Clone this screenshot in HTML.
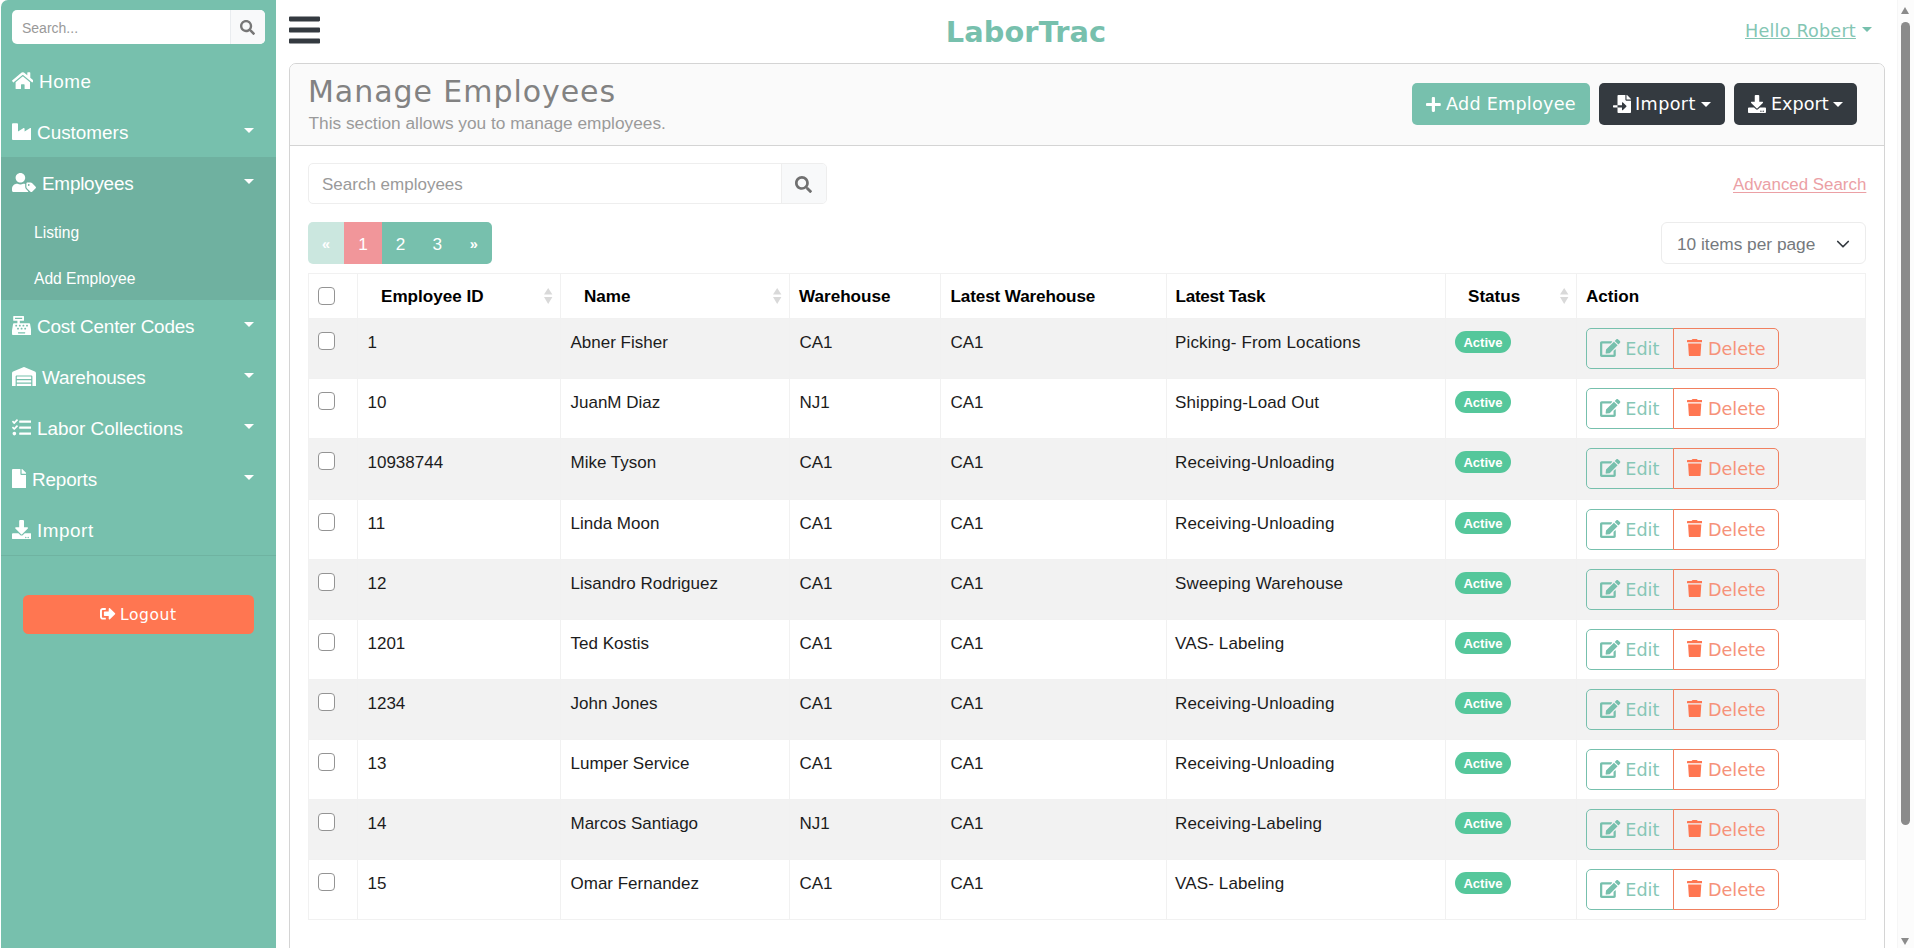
<!DOCTYPE html>
<html lang="en">
<head>
<meta charset="utf-8">
<title>LaborTrac - Manage Employees</title>
<style>
*{box-sizing:border-box;margin:0;padding:0}
html,body{width:1914px;height:948px;overflow:hidden;background:#fff}
body{font-family:"Liberation Sans","DejaVu Sans",sans-serif;color:#212529;position:relative}
svg{display:block}
.m{font-family:"DejaVu Sans","Liberation Sans",sans-serif}
a{text-decoration:none;color:inherit}
/* ---------- sidebar ---------- */
#sidebar{position:absolute;left:1px;top:0;width:275px;height:948px;background:#77c0ad;border-top-left-radius:7px;color:#fff}
.sb-search{position:absolute;left:11px;top:10px;width:253px;height:34px;background:#fff;border-radius:5px;overflow:hidden}
.sb-search span{position:absolute;left:10px;top:9.5px;font-size:14px;color:#999}
.sb-search .btn{position:absolute;left:218px;top:0;width:35px;height:34px;background:#f8f9fa;border-left:1px solid #e9ecef}
.sb-search .btn svg{position:absolute;left:9px;top:10px;width:15px;height:15px;fill:#777}
.nav{position:absolute;left:0;top:55px;width:275px;list-style:none}
.nav .item{height:51px;position:relative}
.nav .item .ic{position:absolute;left:10.9px;top:16.2px;fill:#fff}
.nav .item .lbl{position:absolute;top:16px;font-size:18.9px;white-space:nowrap;color:#fff}
.nav .item .caret{position:absolute;left:243px;top:22.4px;width:0;height:0;border-left:5.2px solid transparent;border-right:5.2px solid transparent;border-top:5.5px solid #fff}
.nav .active{background:#6fb1a0}
.nav .sub{list-style:none}
.nav .sub li{height:46px;position:relative}
.nav .sub li span{position:absolute;left:33px;top:15.5px;font-size:15.6px;color:#fff;white-space:nowrap}
.sb-div{position:absolute;left:0;top:555px;width:275px;height:1px;background:#6fb3a1}
.logout{position:absolute;left:22px;top:595px;width:231px;height:38.6px;background:#ff7651;border-radius:5.5px;color:#fff}
.logout svg{position:absolute;left:77px;top:11px;width:15.5px;height:15.5px;fill:#fff}
.logout span{position:absolute;left:97px;top:11.2px;letter-spacing:.6px;font-size:15.5px;white-space:nowrap;font-family:"DejaVu Sans","Liberation Sans",sans-serif}
/* ---------- top bar ---------- */
#burger{position:absolute;left:289px;top:11.5px;width:31px;height:36px;fill:#343a40}
#brand{position:absolute;left:826px;width:400px;text-align:center;top:14.5px;font-size:28.8px;font-weight:bold;color:#77c0ad;white-space:nowrap;letter-spacing:.1px}
#hello{position:absolute;left:1745px;top:21px;font-size:17.6px;letter-spacing:.2px;color:#84c6b4;white-space:nowrap}
#hello span{text-decoration:underline}
#hello i{position:absolute;left:116.5px;top:6px;width:0;height:0;border-left:5px solid transparent;border-right:5px solid transparent;border-top:5px solid #77c0ad}
/* ---------- card ---------- */
#card{position:absolute;left:289px;top:63px;width:1596px;height:900px;border:1px solid #d4d4d4;border-radius:7px;background:#fff}
#card-h{position:absolute;left:0;top:0;width:1594px;height:82px;background:#fafafa;border-bottom:1px solid #d4d4d4;border-radius:6px 6px 0 0}
#card-h h1{position:absolute;left:18px;top:10.2px;font-size:30px;letter-spacing:.95px;font-weight:normal;color:#828282;white-space:nowrap}
#card-h p{position:absolute;left:18.5px;top:49.2px;font-size:17.3px;color:#9a9a9a;white-space:nowrap}
.hb{position:absolute;top:19px;height:42px;border-radius:5px;color:#fff;font-size:17.6px;white-space:nowrap;font-family:"DejaVu Sans","Liberation Sans",sans-serif}
.hb svg{position:absolute;fill:#fff}
.hb span{position:absolute;top:10.6px}
.hb i{position:absolute;top:19px;width:0;height:0;border-left:5px solid transparent;border-right:5px solid transparent;border-top:5px solid #fff}
/* toolbar */
#semp{position:absolute;left:18px;top:99.3px;width:519px;height:41.2px;border:1px solid #eee;border-radius:5px;background:#fff}
#semp span{position:absolute;left:13px;top:10.3px;font-size:17px;color:#9a9a9a;white-space:nowrap}
#semp .btn{position:absolute;left:472px;top:0;width:45px;height:39.2px;background:#f8f9fa;border-left:1px solid #eee;border-radius:0 4px 4px 0}
#semp .btn svg{position:absolute;left:12.5px;top:11.8px;width:17px;height:17px;fill:#707070}
#adv{position:absolute;left:1443px;top:110.8px;font-size:16.9px;color:#eba0a5;text-underline-offset:2px;text-decoration:underline;white-space:nowrap}
#pager{position:absolute;left:18px;top:158px;height:42px;width:184px;border-radius:5px;overflow:hidden;font-size:17.2px;color:#fff;list-style:none}
#pager li{position:absolute;top:0;height:42px;text-align:center;line-height:45px;background:#77c0ad}
#pager li.q{font-size:14.5px;font-weight:bold;line-height:44.5px}
#perpage{position:absolute;left:1371px;top:158px;width:205px;height:42px;border:1px solid #ececec;border-radius:6px;background:#fff}
#perpage span{position:absolute;left:15px;top:11px;font-size:17.3px;color:#75797d;white-space:nowrap}
#perpage svg{position:absolute;left:174px;top:14.5px;width:14px;height:12.25px;fill:none;stroke:#343a40;stroke-width:2;stroke-linecap:round;stroke-linejoin:round}
/* table */
#tbl{position:absolute;left:18px;top:209px;width:1557px;border-collapse:collapse;table-layout:fixed}
#tbl th,#tbl td{border:1px solid #f1f1f1;vertical-align:top;text-align:left;position:relative}
#tbl th{height:45px;font-size:17.1px;font-weight:bold;color:#000}
#tbl td{height:60px;font-size:17px;color:#1c1c1c}
#tbl tr.odd td{background:#f2f2f2}
#tbl th span.t{position:absolute;top:13.2px;white-space:nowrap}
#tbl td span.t{position:absolute;left:9.5px;top:13.8px;white-space:nowrap}
#tbl td:nth-child(6) span.t{left:8px;letter-spacing:.14px}
.cb{position:absolute;left:9px;top:13.3px;width:17px;height:17.4px;border:1px solid #949494;border-radius:4px;background:#fff}
.sort{position:absolute;right:7.4px;top:14.1px;width:8.4px;height:16px;fill:#d9d9d9}
.badge{position:absolute;left:9px;top:12px;width:56px;height:21.8px;border-radius:11px;background:#55c79b;color:#fff;font-size:13px;font-weight:bold;text-align:center;line-height:24.4px;overflow:hidden}
.grp{position:absolute;left:9.3px;top:9.3px;width:194px;height:40.4px}
.grp .e{position:absolute;left:0;top:0;width:87.6px;height:40.4px;border:1px solid #77c0ad;border-radius:5px 0 0 5px;color:#77c0ad}
.grp .d{position:absolute;left:86.6px;top:0;width:106.4px;height:40.4px;border:1px solid #f08060;border-radius:0 5px 5px 0;color:#f4845f}
.grp svg{position:absolute;top:9.3px}
.grp .e span{color:#86c7b6}.grp .d span{color:#f6927a}
.grp span{position:absolute;top:9.3px;font-size:17.6px;white-space:nowrap;font-family:"DejaVu Sans","Liberation Sans",sans-serif}
/* scrollbar */
#sbar{position:absolute;left:1897px;top:0;width:17px;height:948px;background:#fcfcfc;border-left:1px solid #f6f6f6}
#sbar .th{position:absolute;left:3px;top:22px;width:9px;height:802.5px;border-radius:5px;background:#8b8b8b}
#sbar .up{position:absolute;left:3px;top:7px;width:0;height:0;border-left:4.5px solid transparent;border-right:4.5px solid transparent;border-bottom:7px solid #8b8b8b}
#sbar .dn{position:absolute;left:3px;top:938px;width:0;height:0;border-left:4.5px solid transparent;border-right:4.5px solid transparent;border-top:7px solid #8b8b8b}
</style>
</head>
<body>
<div id="sidebar">
  <div class="sb-search"><span>Search...</span><div class="btn"><svg viewBox="0 0 512 512"><path d="M505 442.7L405.3 343c-4.500-4.500-10.600-7-17-7H372c27.600-35.300 44-79.700 44-128C416 93.100 322.900 0 208 0S0 93.100 0 208s93.100 208 208 208c48.300 0 92.700-16.400 128-44v16.300c0 6.400 2.500 12.500 7 17l99.700 99.700c9.400 9.400 24.600 9.400 33.900 0l28.300-28.300c9.400-9.400 9.400-24.600.1-34zM208 336c-70.700 0-128-57.200-128-128 0-70.700 57.200-128 128-128 70.700 0 128 57.200 128 128 0 70.700-57.200 128-128 128z"/></svg></div></div>
  <ul class="nav">
    <li class="item"><svg class="ic" style="width:21.6px;height:19.2px" viewBox="0 0 576 512"><path d="M280.370 148.260L96 300.110V464a16 16 0 0 0 16 16l112.060-.29a16 16 0 0 0 15.920-16V368a16 16 0 0 1 16-16h64a16 16 0 0 1 16 16v95.640a16 16 0 0 0 16 16.050L464 480a16 16 0 0 0 16-16V300L295.670 148.260a12.190 12.190 0 0 0-15.300 0zM571.600 251.470L488 182.560V44.050a12 12 0 0 0-12-12h-56a12 12 0 0 0-12 12v72.610L318.470 43a48 48 0 0 0-61 0L4.340 251.470a12 12 0 0 0-1.600 16.900l25.500 31A12 12 0 0 0 45.150 301l235.220-193.740a12.190 12.190 0 0 1 15.300 0L530.900 301a12 12 0 0 0 16.900-1.600l25.500-31a12 12 0 0 0-1.700-16.930z"/></svg><span class="lbl" style="left:38px;letter-spacing:.5px">Home</span></li>
    <li class="item"><svg class="ic" style="width:19.2px;height:19.2px" viewBox="0 0 512 512"><path d="M475.115 163.781L336 252.309v-68.280c0-18.916-20.931-30.399-36.885-20.248L160 252.309V56c0-13.255-10.745-24-24-24H24C10.745 32 0 42.745 0 56v400c0 13.255 10.745 24 24 24h464c13.255 0 24-10.745 24-24V184.029c0-18.917-20.931-30.399-36.885-20.248z"/></svg><span class="lbl" style="left:36px">Customers</span><i class="caret"></i></li>
    <li class="active">
      <div class="item"><svg class="ic" style="width:24px;height:19.2px" viewBox="0 0 640 512"><path d="M630.600 364.900l-90.300-90.200c-12-12-28.300-18.700-45.300-18.700h-79.300c-17.700 0-32 14.300-32 32v79.200c0 17 6.700 33.200 18.700 45.200l90.300 90.200c12.500 12.500 32.800 12.500 45.300 0l92.500-92.500c12.600-12.500 12.600-32.700.1-45.200zm-182.800-21c-13.300 0-24-10.700-24-24s10.700-24 24-24 24 10.700 24 24c0 13.200-10.700 24-24 24zm-223.800-88c70.700 0 128-57.300 128-128C352 57.300 294.700 0 224 0S96 57.300 96 128c0 70.600 57.300 127.900 128 127.900zm127.800 111.200V294c-12.200-3.600-24.900-6.200-38.200-6.200h-16.700c-22.200 10.200-46.900 16-72.900 16s-50.600-5.800-72.900-16h-16.700C60.200 287.900 0 348.100 0 422.300v41.600c0 26.500 21.500 48 48 48h352c15.500 0 29.100-7.500 37.900-18.900l-58-58c-18.100-18.100-28.100-42.200-28.100-67.900z"/></svg><span class="lbl" style="left:41px;letter-spacing:-.23px">Employees</span><i class="caret"></i></div>
      <ul class="sub">
        <li><span>Listing</span></li>
        <li><span>Add Employee</span></li>
      </ul>
    </li>
    <li class="item"><svg class="ic" style="width:19.2px;height:19.2px" viewBox="0 0 512 512"><path d="M511.100 378.800l-26.700-160c-2.600-15.400-15.900-26.700-31.600-26.700H208v-64h96c8.800 0 16-7.200 16-16V16c0-8.800-7.200-16-16-16H48c-8.800 0-16 7.200-16 16v96c0 8.800 7.200 16 16 16h96v64H59.100c-15.600 0-29 11.300-31.600 26.700L.8 378.700c-.6 3.500-.9 7-.9 10.500V480c0 17.700 14.300 32 32 32h448c17.700 0 32-14.300 32-32v-90.700c.1-3.500-.2-7-.8-10.500zM280 248c0-8.800 7.200-16 16-16h16c8.800 0 16 7.200 16 16v16c0 8.800-7.200 16-16 16h-16c-8.800 0-16-7.200-16-16v-16zm-32 64h16c8.800 0 16 7.200 16 16v16c0 8.800-7.200 16-16 16h-16c-8.800 0-16-7.200-16-16v-16c0-8.800 7.200-16 16-16zm-32-80c8.800 0 16 7.200 16 16v16c0 8.800-7.200 16-16 16h-16c-8.800 0-16-7.200-16-16v-16c0-8.800 7.200-16 16-16h16zM80 80V48h192v32H80zm40 200h-16c-8.800 0-16-7.200-16-16v-16c0-8.800 7.200-16 16-16h16c8.800 0 16 7.200 16 16v16c0 8.800-7.200 16-16 16zm16 64v-16c0-8.800 7.200-16 16-16h16c8.800 0 16 7.200 16 16v16c0 8.800-7.200 16-16 16h-16c-8.800 0-16-7.200-16-16zm216 112c0 4.400-3.600 8-8 8H168c-4.400 0-8-3.600-8-8v-16c0-4.400 3.600-8 8-8h176c4.400 0 8 3.600 8 8v16zm24-112c0 8.800-7.200 16-16 16h-16c-8.800 0-16-7.200-16-16v-16c0-8.800 7.200-16 16-16h16c8.800 0 16 7.200 16 16v16zm48-80c0 8.800-7.200 16-16 16h-16c-8.800 0-16-7.200-16-16v-16c0-8.800 7.200-16 16-16h16c8.800 0 16 7.200 16 16v16z"/></svg><span class="lbl" style="left:36px;letter-spacing:-.2px">Cost Center Codes</span><i class="caret"></i></li>
    <li class="item"><svg class="ic" style="width:24px;height:19.2px" viewBox="0 0 640 512"><path d="M504 352H136.400c-4.400 0-8 3.600-8 8l-.1 48c0 4.400 3.600 8 8 8H504c4.400 0 8-3.600 8-8v-48c0-4.400-3.600-8-8-8zm0 96H136.100c-4.400 0-8 3.600-8 8l-.1 48c0 4.400 3.600 8 8 8h368c4.400 0 8-3.600 8-8v-48c0-4.400-3.600-8-8-8zm0-192H136.600c-4.400 0-8 3.600-8 8l-.1 48c0 4.400 3.600 8 8 8H504c4.400 0 8-3.600 8-8v-48c0-4.400-3.600-8-8-8zm106.500-139L338.400 3.700a48.150 48.150 0 0 0-36.900 0L29.500 117C11.700 124.500 0 141.900 0 161.300V504c0 4.400 3.600 8 8 8h80c4.400 0 8-3.600 8-8V256c0-17.600 14.600-32 32.600-32h382.800c18 0 32.600 14.400 32.600 32v248c0 4.400 3.600 8 8 8h80c4.400 0 8-3.600 8-8V161.300c0-19.400-11.700-36.800-29.500-44.300z"/></svg><span class="lbl" style="left:41px;letter-spacing:-.19px">Warehouses</span><i class="caret"></i></li>
    <li class="item"><svg class="ic" style="width:19.2px;height:19.2px" viewBox="0 0 512 512"><path d="M139.610 35.500a12 12 0 0 0-17 0L58.930 98.810l-22.700-22.120a12 12 0 0 0-17 0L3.530 92.410a12 12 0 0 0 0 17l47.590 47.400a12.780 12.780 0 0 0 17.610 0l15.590-15.620L156.520 69a12.090 12.090 0 0 0 .09-17zm0 159.190a12 12 0 0 0-17 0l-63.680 63.720-22.700-22.100a12 12 0 0 0-17 0L3.530 252a12 12 0 0 0 0 17L51 316.500a12.770 12.770 0 0 0 17.600 0l15.700-15.690 72.200-72.220a12 12 0 0 0 .09-16.900zM64 368c-26.490 0-48.590 21.500-48.590 48S37.530 464 64 464a48 48 0 0 0 0-96zm432 16H208a16 16 0 0 0-16 16v32a16 16 0 0 0 16 16h288a16 16 0 0 0 16-16v-32a16 16 0 0 0-16-16zm0-320H208a16 16 0 0 0-16 16v32a16 16 0 0 0 16 16h288a16 16 0 0 0 16-16V80a16 16 0 0 0-16-16zm0 160H208a16 16 0 0 0-16 16v32a16 16 0 0 0 16 16h288a16 16 0 0 0 16-16v-32a16 16 0 0 0-16-16z"/></svg><span class="lbl" style="left:36px">Labor Collections</span><i class="caret"></i></li>
    <li class="item"><svg class="ic" style="width:14.4px;height:19.2px" viewBox="0 0 384 512"><path d="M224 136V0H24C10.700 0 0 10.700 0 24v464c0 13.300 10.700 24 24 24h336c13.300 0 24-10.700 24-24V160H248c-13.200 0-24-10.800-24-24zm160-14.100v6.100H256V0h6.100c6.400 0 12.500 2.500 17 7l97.900 98c4.500 4.500 7 10.600 7 16.900z"/></svg><span class="lbl" style="left:31px;letter-spacing:-.17px">Reports</span><i class="caret"></i></li>
    <li class="item"><svg class="ic" style="width:19.2px;height:19.2px" viewBox="0 0 512 512"><path d="M216 0h80c13.300 0 24 10.700 24 24v168h87.700c17.800 0 26.700 21.500 14.100 34.100L269.700 378.300c-7.500 7.500-19.800 7.500-27.300 0L90.100 226.100c-12.600-12.600-3.700-34.100 14.100-34.100H192V24c0-13.300 10.700-24 24-24zm296 376v112c0 13.300-10.700 24-24 24H24c-13.300 0-24-10.700-24-24V376c0-13.300 10.700-24 24-24h146.700l49 49c20.100 20.100 52.500 20.100 72.600 0l49-49H488c13.300 0 24 10.700 24 24zm-124 88c0-11-9-20-20-20s-20 9-20 20 9 20 20 20 20-9 20-20zm64 0c0-11-9-20-20-20s-20 9-20 20 9 20 20 20 20-9 20-20z"/></svg><span class="lbl" style="left:36px;letter-spacing:.53px">Import</span></li>
  </ul>
  <div class="sb-div"></div>
  <a class="logout"><svg viewBox="0 0 512 512"><path d="M497 273L329 441c-15 15-41 4.500-41-17v-96H152c-13.300 0-24-10.700-24-24v-96c0-13.300 10.700-24 24-24h136V88c0-21.400 25.900-32 41-17l168 168c9.300 9.400 9.300 24.600 0 34zM192 436v-40c0-6.600-5.400-12-12-12H96c-17.700 0-32-14.300-32-32V160c0-17.700 14.300-32 32-32h84c6.600 0 12-5.400 12-12V76c0-6.600-5.400-12-12-12H96c-53 0-96 43-96 96v192c0 53 43 96 96 96h84c6.600 0 12-5.400 12-12z"/></svg><span>Logout</span></a>
</div>

<svg id="burger" viewBox="0 0 448 512"><path d="M16 132h416c8.837 0 16-7.163 16-16V76c0-8.837-7.163-16-16-16H16C7.163 60 0 67.163 0 76v40c0 8.837 7.163 16 16 16zm0 160h416c8.837 0 16-7.163 16-16v-40c0-8.837-7.163-16-16-16H16c-8.837 0-16 7.163-16 16v40c0 8.837 7.163 16 16 16zm0 160h416c8.837 0 16-7.163 16-16v-40c0-8.837-7.163-16-16-16H16c-8.837 0-16 7.163-16 16v40c0 8.837 7.163 16 16 16z"/></svg>
<div id="brand" class="m">LaborTrac</div>
<a id="hello" class="m"><span>Hello Robert</span><i></i></a>

<div id="card">
  <div id="card-h">
    <h1 class="m">Manage Employees</h1>
    <p>This section allows you to manage employees.</p>
    <a class="hb" style="left:1122px;width:178px;background:#77c0ad"><svg style="left:14.3px;top:12.5px;width:14.8px;height:17px" viewBox="0 0 448 512"><path d="M416 208H272V64c0-17.670-14.330-32-32-32h-32c-17.670 0-32 14.330-32 32v144H32c-17.670 0-32 14.330-32 32v32c0 17.670 14.330 32 32 32h144v144c0 17.670 14.330 32 32 32h32c17.670 0 32-14.330 32-32V304h144c17.670 0 32-14.330 32-32v-32c0-17.670-14.330-32-32-32z"/></svg><span style="left:34px;letter-spacing:.25px">Add Employee</span></a>
    <a class="hb" style="left:1309px;width:126px;background:#343a40"><svg style="left:14px;top:12px;width:18px;height:18px" viewBox="0 0 512 512"><path d="M16 288c-8.800 0-16 7.200-16 16v32c0 8.800 7.200 16 16 16h112v-64zm489-183L407.100 7c-4.500-4.500-10.600-7-17-7H384v128h128v-6.100c0-6.300-2.500-12.400-7-16.900zm-153 31V0H152c-13.300 0-24 10.700-24 24v264h128v-65.200c0-14.300 17.300-21.400 27.400-11.300L379 308c6.600 6.700 6.600 17.400 0 24l-95.700 96.400c-10.100 10.100-27.400 3-27.400-11.300V352H128v136c0 13.300 10.700 24 24 24h336c13.300 0 24-10.700 24-24V160H376c-13.200 0-24-10.800-24-24z"/></svg><span style="left:36px;letter-spacing:.4px">Import</span><i style="left:102px"></i></a>
    <a class="hb" style="left:1444px;width:123px;background:#343a40"><svg style="left:14px;top:12px;width:18px;height:18px" viewBox="0 0 512 512"><path d="M216 0h80c13.300 0 24 10.700 24 24v168h87.700c17.800 0 26.700 21.500 14.100 34.100L269.700 378.300c-7.500 7.500-19.800 7.500-27.300 0L90.100 226.100c-12.600-12.600-3.700-34.100 14.100-34.100H192V24c0-13.300 10.700-24 24-24zm296 376v112c0 13.300-10.700 24-24 24H24c-13.300 0-24-10.700-24-24V376c0-13.300 10.700-24 24-24h146.700l49 49c20.100 20.100 52.500 20.100 72.600 0l49-49H488c13.300 0 24 10.700 24 24zm-124 88c0-11-9-20-20-20s-20 9-20 20 9 20 20 20 20-9 20-20zm64 0c0-11-9-20-20-20s-20 9-20 20 9 20 20 20 20-9 20-20z"/></svg><span style="left:37px">Export</span><i style="left:99px"></i></a>
  </div>
  <div id="semp"><span>Search employees</span><div class="btn"><svg viewBox="0 0 512 512"><path d="M505 442.7L405.3 343c-4.500-4.500-10.600-7-17-7H372c27.600-35.300 44-79.700 44-128C416 93.100 322.900 0 208 0S0 93.100 0 208s93.100 208 208 208c48.300 0 92.700-16.400 128-44v16.300c0 6.400 2.500 12.500 7 17l99.700 99.700c9.400 9.400 24.600 9.400 33.900 0l28.300-28.300c9.400-9.400 9.400-24.600.1-34zM208 336c-70.700 0-128-57.200-128-128 0-70.700 57.200-128 128-128 70.700 0 128 57.200 128 128 0 70.700-57.200 128-128 128z"/></svg></div></div>
  <a id="adv">Advanced Search</a>
  <ul id="pager"><li class="q" style="left:0;width:36px;background:#cbe7df">&laquo;</li><li style="left:36px;width:38.3px;background:#f1969a">1</li><li style="left:74.3px;width:36.7px">2</li><li style="left:111px;width:36.5px">3</li><li class="q" style="left:147.5px;width:36.5px">&raquo;</li></ul>
  <div id="perpage"><span>10 items per page</span><svg viewBox="0 0 16 14"><path d="M2 4l6 6 6-6"/></svg></div>
  <table id="tbl">
    <colgroup><col style="width:49px"><col style="width:203px"><col style="width:229px"><col style="width:151px"><col style="width:226px"><col style="width:279px"><col style="width:131px"><col style="width:289px"></colgroup>
    <thead>
      <tr><th><span class="cb"></span></th><th><span class="t" style="left:23px">Employee ID</span><svg class="sort" viewBox="0 0 8.4 16"><path d="M4.2 0L8.4 6.6H0zM0 9.1H8.4L4.2 15.9z"/></svg></th><th><span class="t" style="left:23px">Name</span><svg class="sort" viewBox="0 0 8.4 16"><path d="M4.2 0L8.4 6.6H0zM0 9.1H8.4L4.2 15.9z"/></svg></th><th><span class="t" style="left:9px">Warehouse</span></th><th><span class="t" style="left:9.5px;letter-spacing:-.12px">Latest Warehouse</span></th><th><span class="t" style="left:8.5px;letter-spacing:-.27px">Latest Task</span></th><th><span class="t" style="left:22px">Status</span><svg class="sort" viewBox="0 0 8.4 16"><path d="M4.2 0L8.4 6.6H0zM0 9.1H8.4L4.2 15.9z"/></svg></th><th><span class="t" style="left:9px">Action</span></th></tr>
    </thead>
    <tbody>
      <tr class="odd"><td><span class="cb"></span></td><td><span class="t">1</span></td><td><span class="t">Abner Fisher</span></td><td><span class="t">CA1</span></td><td><span class="t">CA1</span></td><td><span class="t">Picking- From Locations</span></td><td><span class="badge">Active</span></td><td><div class="grp"><a class="e"><svg style="left:13px;width:20.3px;height:18px;fill:#77c0ad" viewBox="0 0 576 512"><path d="M402.600 83.200l90.200 90.200c3.800 3.800 3.800 10 0 13.800L274.400 405.600l-92.800 10.300c-12.400 1.400-22.900-9.100-21.500-21.500l10.300-92.800L388.800 83.200c3.800-3.800 10-3.800 13.800 0zm162-22.900l-48.800-48.800c-15.200-15.200-39.900-15.200-55.200 0l-35.400 35.400c-3.800 3.800-3.800 10 0 13.800l90.200 90.200c3.800 3.800 10 3.800 13.800 0l35.400-35.400c15.200-15.300 15.200-40 0-55.200zM384 346.200V448H64V128h229.800c3.200 0 6.200-1.300 8.500-3.500l40-40c7.600-7.600 2.200-20.500-8.500-20.500H48C21.500 64 0 85.500 0 112v352c0 26.500 21.500 48 48 48h352c26.500 0 48-21.500 48-48V306.200c0-10.700-12.900-16-20.500-8.500l-40 40c-2.200 2.300-3.500 5.300-3.500 8.500z"/></svg><span style="left:38px">Edit</span></a><a class="d"><svg style="left:13px;width:15.4px;height:17.6px;fill:#ff7651" viewBox="0 0 448 512"><path d="M432 32H312l-9.400-18.700A24 24 0 0 0 281.100 0H166.800a23.720 23.720 0 0 0-21.400 13.300L136 32H16A16 16 0 0 0 0 48v32a16 16 0 0 0 16 16h416a16 16 0 0 0 16-16V48a16 16 0 0 0-16-16zM53.200 467a48 48 0 0 0 47.900 45h245.800a48 48 0 0 0 47.900-45L416 128H32z"/></svg><span style="left:34px">Delete</span></a></div></td></tr>
      <tr class="even"><td><span class="cb"></span></td><td><span class="t">10</span></td><td><span class="t">JuanM Diaz</span></td><td><span class="t">NJ1</span></td><td><span class="t">CA1</span></td><td><span class="t">Shipping-Load Out</span></td><td><span class="badge">Active</span></td><td><div class="grp"><a class="e"><svg style="left:13px;width:20.3px;height:18px;fill:#77c0ad" viewBox="0 0 576 512"><path d="M402.600 83.200l90.200 90.200c3.800 3.800 3.800 10 0 13.800L274.400 405.600l-92.800 10.300c-12.400 1.400-22.900-9.100-21.500-21.500l10.300-92.800L388.800 83.200c3.800-3.800 10-3.800 13.800 0zm162-22.900l-48.800-48.800c-15.200-15.200-39.900-15.200-55.200 0l-35.400 35.400c-3.800 3.800-3.800 10 0 13.800l90.200 90.200c3.800 3.800 10 3.800 13.800 0l35.400-35.400c15.200-15.300 15.200-40 0-55.200zM384 346.200V448H64V128h229.800c3.200 0 6.200-1.300 8.500-3.500l40-40c7.600-7.600 2.200-20.500-8.500-20.500H48C21.500 64 0 85.500 0 112v352c0 26.500 21.500 48 48 48h352c26.500 0 48-21.500 48-48V306.200c0-10.700-12.900-16-20.500-8.500l-40 40c-2.200 2.300-3.500 5.300-3.500 8.500z"/></svg><span style="left:38px">Edit</span></a><a class="d"><svg style="left:13px;width:15.4px;height:17.6px;fill:#ff7651" viewBox="0 0 448 512"><path d="M432 32H312l-9.400-18.700A24 24 0 0 0 281.100 0H166.800a23.720 23.720 0 0 0-21.400 13.300L136 32H16A16 16 0 0 0 0 48v32a16 16 0 0 0 16 16h416a16 16 0 0 0 16-16V48a16 16 0 0 0-16-16zM53.200 467a48 48 0 0 0 47.900 45h245.800a48 48 0 0 0 47.900-45L416 128H32z"/></svg><span style="left:34px">Delete</span></a></div></td></tr>
      <tr class="odd" style="height:61px"><td style="height:61px"><span class="cb"></span></td><td><span class="t">10938744</span></td><td><span class="t">Mike Tyson</span></td><td><span class="t">CA1</span></td><td><span class="t">CA1</span></td><td><span class="t">Receiving-Unloading</span></td><td><span class="badge">Active</span></td><td><div class="grp"><a class="e"><svg style="left:13px;width:20.3px;height:18px;fill:#77c0ad" viewBox="0 0 576 512"><path d="M402.600 83.200l90.200 90.200c3.800 3.800 3.800 10 0 13.800L274.400 405.600l-92.800 10.300c-12.400 1.400-22.900-9.100-21.500-21.500l10.300-92.800L388.800 83.200c3.800-3.800 10-3.800 13.800 0zm162-22.900l-48.800-48.800c-15.200-15.200-39.900-15.200-55.200 0l-35.400 35.400c-3.800 3.800-3.800 10 0 13.800l90.200 90.200c3.800 3.800 10 3.800 13.800 0l35.400-35.400c15.200-15.300 15.200-40 0-55.200zM384 346.200V448H64V128h229.800c3.200 0 6.200-1.300 8.500-3.500l40-40c7.600-7.600 2.200-20.500-8.500-20.500H48C21.500 64 0 85.500 0 112v352c0 26.500 21.500 48 48 48h352c26.500 0 48-21.500 48-48V306.200c0-10.700-12.900-16-20.500-8.500l-40 40c-2.200 2.300-3.500 5.300-3.500 8.500z"/></svg><span style="left:38px">Edit</span></a><a class="d"><svg style="left:13px;width:15.4px;height:17.6px;fill:#ff7651" viewBox="0 0 448 512"><path d="M432 32H312l-9.400-18.700A24 24 0 0 0 281.100 0H166.800a23.720 23.720 0 0 0-21.400 13.300L136 32H16A16 16 0 0 0 0 48v32a16 16 0 0 0 16 16h416a16 16 0 0 0 16-16V48a16 16 0 0 0-16-16zM53.200 467a48 48 0 0 0 47.900 45h245.800a48 48 0 0 0 47.900-45L416 128H32z"/></svg><span style="left:34px">Delete</span></a></div></td></tr>
      <tr class="even"><td><span class="cb"></span></td><td><span class="t">11</span></td><td><span class="t">Linda Moon</span></td><td><span class="t">CA1</span></td><td><span class="t">CA1</span></td><td><span class="t">Receiving-Unloading</span></td><td><span class="badge">Active</span></td><td><div class="grp"><a class="e"><svg style="left:13px;width:20.3px;height:18px;fill:#77c0ad" viewBox="0 0 576 512"><path d="M402.600 83.200l90.200 90.200c3.800 3.800 3.800 10 0 13.800L274.400 405.600l-92.800 10.300c-12.400 1.400-22.900-9.100-21.500-21.500l10.300-92.800L388.800 83.200c3.800-3.800 10-3.800 13.800 0zm162-22.900l-48.800-48.800c-15.200-15.200-39.900-15.200-55.200 0l-35.400 35.400c-3.800 3.800-3.800 10 0 13.800l90.200 90.200c3.800 3.800 10 3.800 13.800 0l35.400-35.400c15.200-15.300 15.200-40 0-55.200zM384 346.200V448H64V128h229.800c3.200 0 6.200-1.300 8.500-3.500l40-40c7.600-7.600 2.200-20.500-8.500-20.500H48C21.500 64 0 85.500 0 112v352c0 26.500 21.500 48 48 48h352c26.500 0 48-21.500 48-48V306.200c0-10.700-12.900-16-20.500-8.500l-40 40c-2.200 2.300-3.500 5.300-3.500 8.500z"/></svg><span style="left:38px">Edit</span></a><a class="d"><svg style="left:13px;width:15.4px;height:17.6px;fill:#ff7651" viewBox="0 0 448 512"><path d="M432 32H312l-9.400-18.700A24 24 0 0 0 281.100 0H166.800a23.720 23.720 0 0 0-21.400 13.300L136 32H16A16 16 0 0 0 0 48v32a16 16 0 0 0 16 16h416a16 16 0 0 0 16-16V48a16 16 0 0 0-16-16zM53.200 467a48 48 0 0 0 47.900 45h245.800a48 48 0 0 0 47.900-45L416 128H32z"/></svg><span style="left:34px">Delete</span></a></div></td></tr>
      <tr class="odd"><td><span class="cb"></span></td><td><span class="t">12</span></td><td><span class="t">Lisandro Rodriguez</span></td><td><span class="t">CA1</span></td><td><span class="t">CA1</span></td><td><span class="t">Sweeping Warehouse</span></td><td><span class="badge">Active</span></td><td><div class="grp"><a class="e"><svg style="left:13px;width:20.3px;height:18px;fill:#77c0ad" viewBox="0 0 576 512"><path d="M402.600 83.200l90.200 90.200c3.800 3.800 3.800 10 0 13.800L274.400 405.600l-92.800 10.300c-12.400 1.400-22.900-9.100-21.500-21.500l10.300-92.800L388.800 83.200c3.800-3.800 10-3.800 13.800 0zm162-22.900l-48.800-48.800c-15.200-15.200-39.900-15.200-55.200 0l-35.400 35.400c-3.800 3.800-3.800 10 0 13.800l90.200 90.200c3.800 3.800 10 3.800 13.800 0l35.400-35.400c15.200-15.300 15.200-40 0-55.200zM384 346.200V448H64V128h229.800c3.200 0 6.200-1.300 8.500-3.500l40-40c7.600-7.600 2.200-20.500-8.500-20.500H48C21.500 64 0 85.500 0 112v352c0 26.500 21.500 48 48 48h352c26.500 0 48-21.500 48-48V306.200c0-10.700-12.900-16-20.500-8.500l-40 40c-2.200 2.300-3.500 5.300-3.500 8.500z"/></svg><span style="left:38px">Edit</span></a><a class="d"><svg style="left:13px;width:15.4px;height:17.6px;fill:#ff7651" viewBox="0 0 448 512"><path d="M432 32H312l-9.400-18.700A24 24 0 0 0 281.100 0H166.800a23.720 23.720 0 0 0-21.400 13.300L136 32H16A16 16 0 0 0 0 48v32a16 16 0 0 0 16 16h416a16 16 0 0 0 16-16V48a16 16 0 0 0-16-16zM53.200 467a48 48 0 0 0 47.900 45h245.800a48 48 0 0 0 47.900-45L416 128H32z"/></svg><span style="left:34px">Delete</span></a></div></td></tr>
      <tr class="even"><td><span class="cb"></span></td><td><span class="t">1201</span></td><td><span class="t">Ted Kostis</span></td><td><span class="t">CA1</span></td><td><span class="t">CA1</span></td><td><span class="t">VAS- Labeling</span></td><td><span class="badge">Active</span></td><td><div class="grp"><a class="e"><svg style="left:13px;width:20.3px;height:18px;fill:#77c0ad" viewBox="0 0 576 512"><path d="M402.600 83.200l90.200 90.200c3.800 3.800 3.800 10 0 13.800L274.400 405.600l-92.800 10.300c-12.400 1.400-22.900-9.100-21.500-21.500l10.300-92.800L388.800 83.200c3.800-3.800 10-3.800 13.800 0zm162-22.900l-48.800-48.800c-15.200-15.200-39.900-15.200-55.200 0l-35.400 35.400c-3.800 3.800-3.800 10 0 13.800l90.200 90.200c3.800 3.800 10 3.800 13.800 0l35.400-35.400c15.200-15.300 15.200-40 0-55.200zM384 346.200V448H64V128h229.800c3.200 0 6.200-1.300 8.500-3.500l40-40c7.600-7.600 2.200-20.500-8.500-20.500H48C21.500 64 0 85.500 0 112v352c0 26.500 21.500 48 48 48h352c26.500 0 48-21.500 48-48V306.200c0-10.700-12.900-16-20.500-8.500l-40 40c-2.200 2.300-3.500 5.300-3.500 8.500z"/></svg><span style="left:38px">Edit</span></a><a class="d"><svg style="left:13px;width:15.4px;height:17.6px;fill:#ff7651" viewBox="0 0 448 512"><path d="M432 32H312l-9.400-18.700A24 24 0 0 0 281.100 0H166.800a23.720 23.720 0 0 0-21.400 13.300L136 32H16A16 16 0 0 0 0 48v32a16 16 0 0 0 16 16h416a16 16 0 0 0 16-16V48a16 16 0 0 0-16-16zM53.200 467a48 48 0 0 0 47.900 45h245.800a48 48 0 0 0 47.900-45L416 128H32z"/></svg><span style="left:34px">Delete</span></a></div></td></tr>
      <tr class="odd"><td><span class="cb"></span></td><td><span class="t">1234</span></td><td><span class="t">John Jones</span></td><td><span class="t">CA1</span></td><td><span class="t">CA1</span></td><td><span class="t">Receiving-Unloading</span></td><td><span class="badge">Active</span></td><td><div class="grp"><a class="e"><svg style="left:13px;width:20.3px;height:18px;fill:#77c0ad" viewBox="0 0 576 512"><path d="M402.600 83.200l90.200 90.200c3.800 3.800 3.800 10 0 13.800L274.400 405.600l-92.800 10.300c-12.400 1.400-22.900-9.100-21.500-21.500l10.300-92.800L388.800 83.200c3.800-3.800 10-3.800 13.800 0zm162-22.900l-48.800-48.800c-15.200-15.200-39.900-15.200-55.200 0l-35.400 35.400c-3.800 3.800-3.800 10 0 13.800l90.200 90.200c3.800 3.800 10 3.800 13.800 0l35.400-35.400c15.200-15.300 15.200-40 0-55.200zM384 346.200V448H64V128h229.800c3.200 0 6.200-1.300 8.500-3.500l40-40c7.600-7.600 2.200-20.500-8.500-20.500H48C21.500 64 0 85.500 0 112v352c0 26.500 21.500 48 48 48h352c26.500 0 48-21.500 48-48V306.200c0-10.700-12.900-16-20.500-8.500l-40 40c-2.200 2.300-3.500 5.300-3.500 8.500z"/></svg><span style="left:38px">Edit</span></a><a class="d"><svg style="left:13px;width:15.4px;height:17.6px;fill:#ff7651" viewBox="0 0 448 512"><path d="M432 32H312l-9.400-18.700A24 24 0 0 0 281.100 0H166.800a23.720 23.720 0 0 0-21.400 13.300L136 32H16A16 16 0 0 0 0 48v32a16 16 0 0 0 16 16h416a16 16 0 0 0 16-16V48a16 16 0 0 0-16-16zM53.200 467a48 48 0 0 0 47.900 45h245.800a48 48 0 0 0 47.900-45L416 128H32z"/></svg><span style="left:34px">Delete</span></a></div></td></tr>
      <tr class="even"><td><span class="cb"></span></td><td><span class="t">13</span></td><td><span class="t">Lumper Service</span></td><td><span class="t">CA1</span></td><td><span class="t">CA1</span></td><td><span class="t">Receiving-Unloading</span></td><td><span class="badge">Active</span></td><td><div class="grp"><a class="e"><svg style="left:13px;width:20.3px;height:18px;fill:#77c0ad" viewBox="0 0 576 512"><path d="M402.600 83.200l90.200 90.200c3.800 3.800 3.800 10 0 13.800L274.400 405.600l-92.800 10.300c-12.400 1.400-22.900-9.100-21.500-21.500l10.300-92.800L388.800 83.200c3.800-3.800 10-3.800 13.800 0zm162-22.900l-48.800-48.800c-15.200-15.200-39.900-15.200-55.200 0l-35.400 35.400c-3.800 3.800-3.800 10 0 13.800l90.200 90.200c3.800 3.800 10 3.800 13.800 0l35.400-35.400c15.200-15.300 15.200-40 0-55.200zM384 346.200V448H64V128h229.800c3.200 0 6.200-1.300 8.500-3.500l40-40c7.600-7.600 2.200-20.500-8.500-20.500H48C21.500 64 0 85.500 0 112v352c0 26.500 21.500 48 48 48h352c26.500 0 48-21.500 48-48V306.200c0-10.700-12.900-16-20.500-8.500l-40 40c-2.200 2.300-3.500 5.300-3.500 8.500z"/></svg><span style="left:38px">Edit</span></a><a class="d"><svg style="left:13px;width:15.4px;height:17.6px;fill:#ff7651" viewBox="0 0 448 512"><path d="M432 32H312l-9.400-18.700A24 24 0 0 0 281.100 0H166.800a23.720 23.720 0 0 0-21.400 13.300L136 32H16A16 16 0 0 0 0 48v32a16 16 0 0 0 16 16h416a16 16 0 0 0 16-16V48a16 16 0 0 0-16-16zM53.200 467a48 48 0 0 0 47.900 45h245.800a48 48 0 0 0 47.900-45L416 128H32z"/></svg><span style="left:34px">Delete</span></a></div></td></tr>
      <tr class="odd"><td><span class="cb"></span></td><td><span class="t">14</span></td><td><span class="t">Marcos Santiago</span></td><td><span class="t">NJ1</span></td><td><span class="t">CA1</span></td><td><span class="t">Receiving-Labeling</span></td><td><span class="badge">Active</span></td><td><div class="grp"><a class="e"><svg style="left:13px;width:20.3px;height:18px;fill:#77c0ad" viewBox="0 0 576 512"><path d="M402.600 83.200l90.200 90.200c3.800 3.800 3.800 10 0 13.800L274.400 405.600l-92.800 10.300c-12.400 1.400-22.900-9.100-21.500-21.500l10.300-92.800L388.800 83.200c3.800-3.800 10-3.800 13.800 0zm162-22.900l-48.800-48.800c-15.200-15.200-39.900-15.200-55.200 0l-35.400 35.400c-3.800 3.800-3.800 10 0 13.800l90.200 90.200c3.800 3.800 10 3.800 13.800 0l35.400-35.400c15.200-15.300 15.200-40 0-55.200zM384 346.200V448H64V128h229.800c3.200 0 6.200-1.300 8.500-3.500l40-40c7.600-7.600 2.200-20.500-8.500-20.500H48C21.500 64 0 85.500 0 112v352c0 26.500 21.500 48 48 48h352c26.500 0 48-21.500 48-48V306.200c0-10.700-12.900-16-20.500-8.500l-40 40c-2.200 2.300-3.500 5.300-3.500 8.500z"/></svg><span style="left:38px">Edit</span></a><a class="d"><svg style="left:13px;width:15.4px;height:17.6px;fill:#ff7651" viewBox="0 0 448 512"><path d="M432 32H312l-9.400-18.700A24 24 0 0 0 281.100 0H166.800a23.720 23.720 0 0 0-21.400 13.300L136 32H16A16 16 0 0 0 0 48v32a16 16 0 0 0 16 16h416a16 16 0 0 0 16-16V48a16 16 0 0 0-16-16zM53.200 467a48 48 0 0 0 47.900 45h245.800a48 48 0 0 0 47.900-45L416 128H32z"/></svg><span style="left:34px">Delete</span></a></div></td></tr>
      <tr class="even"><td><span class="cb"></span></td><td><span class="t">15</span></td><td><span class="t">Omar Fernandez</span></td><td><span class="t">CA1</span></td><td><span class="t">CA1</span></td><td><span class="t">VAS- Labeling</span></td><td><span class="badge">Active</span></td><td><div class="grp"><a class="e"><svg style="left:13px;width:20.3px;height:18px;fill:#77c0ad" viewBox="0 0 576 512"><path d="M402.600 83.200l90.200 90.200c3.800 3.800 3.800 10 0 13.800L274.400 405.600l-92.800 10.300c-12.400 1.400-22.900-9.100-21.500-21.500l10.300-92.800L388.800 83.200c3.800-3.800 10-3.800 13.800 0zm162-22.900l-48.800-48.800c-15.200-15.200-39.900-15.200-55.200 0l-35.400 35.400c-3.800 3.800-3.800 10 0 13.800l90.200 90.200c3.800 3.800 10 3.800 13.800 0l35.400-35.400c15.200-15.300 15.200-40 0-55.200zM384 346.200V448H64V128h229.800c3.200 0 6.200-1.300 8.500-3.500l40-40c7.600-7.600 2.200-20.500-8.500-20.500H48C21.500 64 0 85.500 0 112v352c0 26.500 21.500 48 48 48h352c26.500 0 48-21.500 48-48V306.200c0-10.700-12.900-16-20.500-8.500l-40 40c-2.200 2.300-3.500 5.300-3.500 8.500z"/></svg><span style="left:38px">Edit</span></a><a class="d"><svg style="left:13px;width:15.4px;height:17.6px;fill:#ff7651" viewBox="0 0 448 512"><path d="M432 32H312l-9.400-18.700A24 24 0 0 0 281.100 0H166.800a23.720 23.720 0 0 0-21.400 13.300L136 32H16A16 16 0 0 0 0 48v32a16 16 0 0 0 16 16h416a16 16 0 0 0 16-16V48a16 16 0 0 0-16-16zM53.200 467a48 48 0 0 0 47.900 45h245.800a48 48 0 0 0 47.900-45L416 128H32z"/></svg><span style="left:34px">Delete</span></a></div></td></tr>
    </tbody>
  </table>
</div>

<div id="sbar"><i class="up"></i><div class="th"></div><i class="dn"></i></div>

</body>
</html>
